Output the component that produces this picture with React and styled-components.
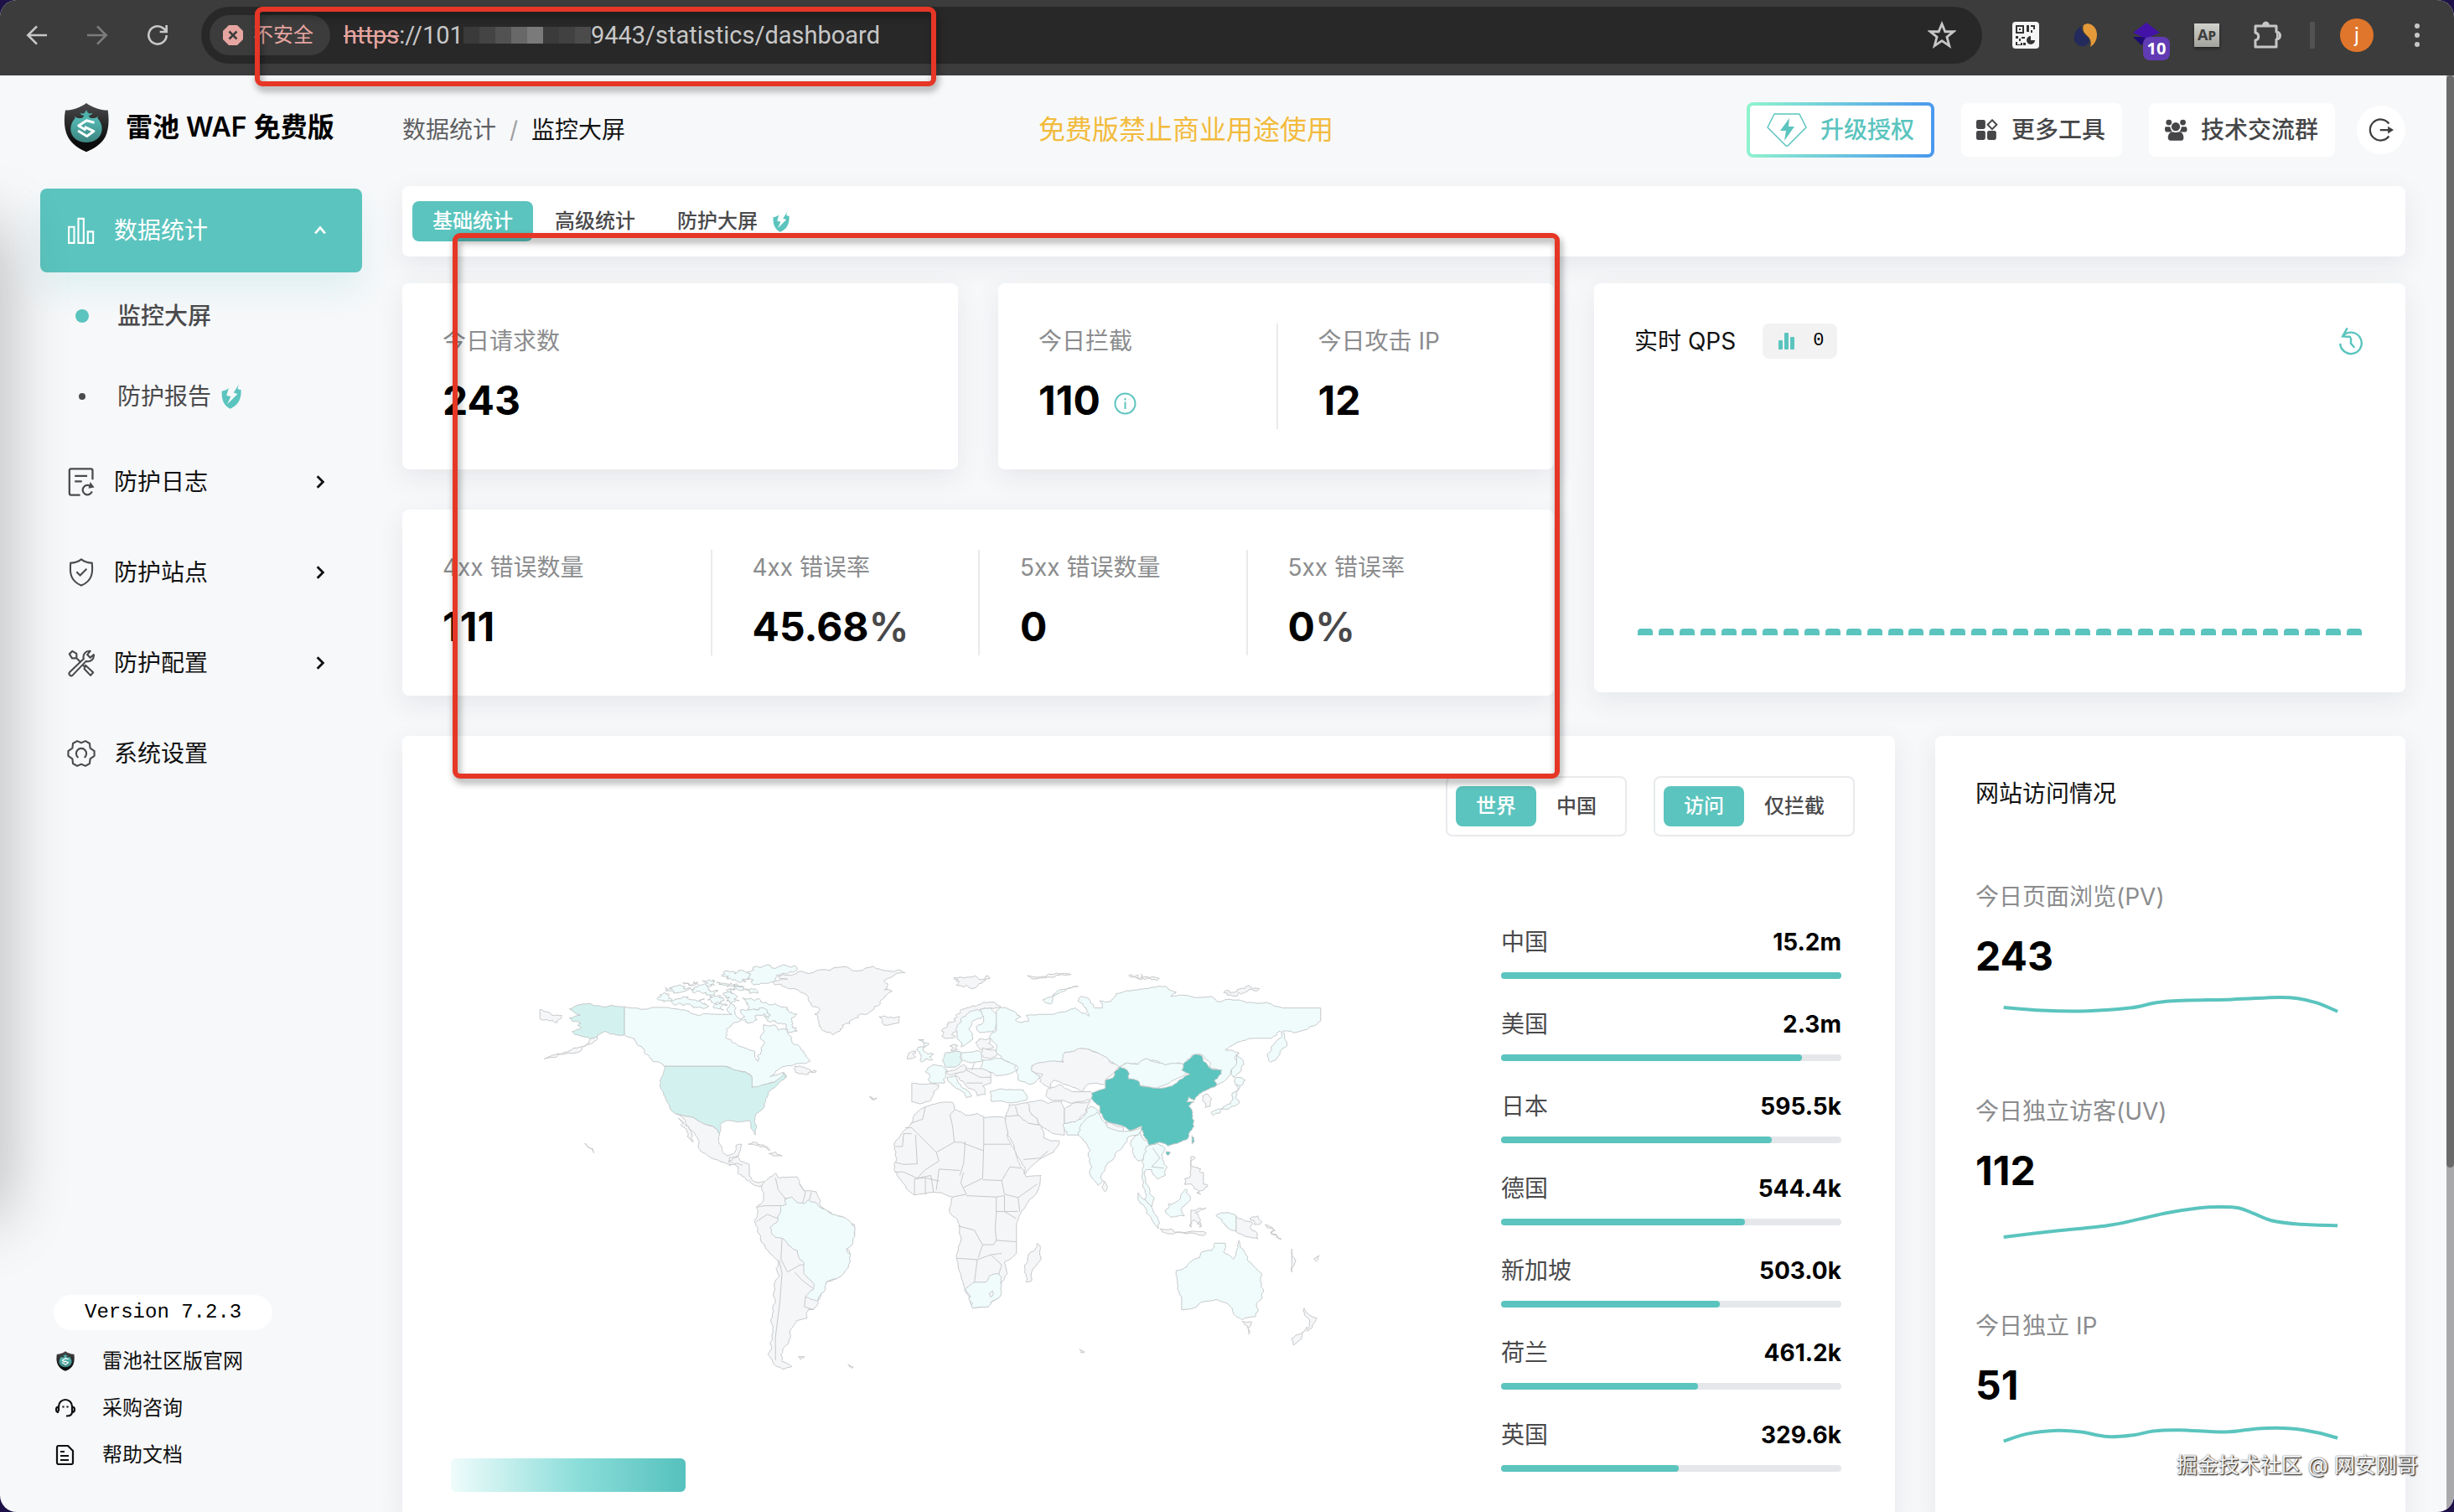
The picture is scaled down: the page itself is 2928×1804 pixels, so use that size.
import React from 'react';
import styled, { createGlobalStyle } from 'styled-components';

const teal = '#5bc4be';
const ink = '#0d0d0d';
const graphite = '#4b4b4d';

const GlobalStyle = createGlobalStyle`
  * { box-sizing: border-box; }
  html, body { margin: 0; background: #1d1147; }
  body { font-family: Inter, "Noto Sans CJK SC", sans-serif; font-size: 28px; line-height: 42px; color: ${ink}; }
  button { font: inherit; color: inherit; border: 0; padding: 0; background: none; cursor: pointer; }
  a { color: inherit; text-decoration: none; }
  h1, h2, p, ul, ol, dl, dd, dt { margin: 0; padding: 0; font-size: inherit; font-weight: inherit; list-style: none; }
  svg { display: block; flex: none; }
`;

const Window = styled.div`
  position: relative;
  display: flex;
  flex-direction: column;
  height: 100vh;
  overflow: hidden;
  border-radius: 20px;
  background: #f7f8fa;
`;

/* ---------- browser bar ---------- */

const BrowserBar = styled.header`
  display: flex;
  align-items: center;
  flex: none;
  height: 90px;
  padding: 0 8px 6px;
  background: #3c3c3c;
  color: #c7c7c7;
`;

const BarButton = styled.button`
  display: grid;
  place-items: center;
  flex: none;
  width: 72px;
  height: 72px;
  color: ${(p) => (p.$dim ? '#7c7c7c' : '#c7c7c7')};
`;

const AddressBar = styled.div`
  display: flex;
  align-items: center;
  flex: 1;
  height: 68px;
  margin: 0 16px;
  padding: 0 12px 0 10px;
  border-radius: 34px;
  background: #282828;
`;

const SecurityChip = styled.button`
  display: flex;
  align-items: center;
  gap: 12px;
  height: 48px;
  padding: 0 20px 0 16px;
  border-radius: 24px;
  background: #3c3c3c;
  && { color: #e6a5a0; }
  font-size: 24px;
`;

const Url = styled.p`
  display: flex;
  align-items: center;
  flex: 1;
  margin-left: 16px;
  font-size: 29px;
  font-family: Roboto, "Noto Sans CJK SC", sans-serif;
  color: #c7c7c7;
  s { color: #e6a5a0; }
`;

const Mosaic = styled.span`
  display: flex;
  width: 152px;
  height: 20px;
`;

const Tile = styled.span`
  flex: 1;
  background: ${(p) => p.$tone};
`;

const BarDivider = styled.span`
  width: 6px;
  height: 32px;
  margin: 0 14px 0 15px;
  background: #525252;
`;

const Avatar = styled.span`
  display: grid;
  place-items: center;
  width: 40px;
  height: 40px;
  border-radius: 50%;
  background: #e0762b;
  color: #fff;
  font-size: 24px;
  line-height: 24px;
`;

const ExtensionCount = styled.span`
  position: absolute;
  right: 8px;
  bottom: 6px;
  width: 32px;
  border-radius: 8px;
  background: #613bb3;
  color: #fff;
  font-family: "Noto Sans", sans-serif;
  font-size: 20px;
  font-weight: 700;
  line-height: 28px;
  text-align: center;
`;

const ExtensionButton = styled(BarButton)`
  position: relative;
`;

const ApTile = styled.span`
  width: 30px;
  height: 28px;
  background: linear-gradient(#d2d2cc, #a3a39d);
  box-shadow: 0 2px 3px #222;
  color: #3e3e3e;
  font-family: "Noto Sans", sans-serif;
  font-size: 18px;
  font-weight: 700;
  line-height: 26px;
  font-variant-caps: small-caps;
`;

/* ---------- page shell ---------- */

const Page = styled.div`
  display: flex;
  flex: 1;
  min-height: 0;
`;

const Sidebar = styled.aside`
  display: flex;
  flex-direction: column;
  flex: none;
  width: 480px;
  padding: 32px 48px 40px;
`;

const EdgeShade = styled.div`
  position: absolute;
  left: -60px;
  top: 270px;
  width: 60px;
  height: 1180px;
  box-shadow: 0 0 80px rgba(0, 0, 0, 0.32);
`;

const Brand = styled.h1`
  display: flex;
  align-items: center;
  gap: 20px;
  height: 60px;
  padding-left: 28px;
  font-size: 32px;
  font-weight: 600;
  color: #000;
  white-space: nowrap;
`;

const Menu = styled.nav`
  display: flex;
  flex-direction: column;
  margin-top: 43px;
`;

const MenuGroup = styled.button`
  display: flex;
  align-items: center;
  gap: 22px;
  height: 100px;
  margin-bottom: 8px;
  padding: 0 40px 0 32px;
  border-radius: 8px;
  text-align: left;
  && { color: ${(p) => (p.$active ? '#fff' : '#111')}; }
  background: ${(p) => (p.$active ? teal : 'none')};
  box-shadow: ${(p) => (p.$active ? '0 20px 40px rgba(91, 196, 190, 0.16)' : 'none')};
  svg:first-child { color: ${(p) => (p.$active ? '#fff' : graphite)}; }
  span { flex: 1; }
`;

const SubMenu = styled.ul`
  display: flex;
  flex-direction: column;
  margin: -4px 0 4px;
`;

const SubMenuLink = styled.a`
  display: flex;
  align-items: center;
  height: 96px;
  gap: 12px;
  padding-left: 38px;
  color: #4a4a4c;
  font-weight: ${(p) => (p.$active ? 500 : 400)};
`;

const Dot = styled.span`
  display: grid;
  place-items: center;
  width: 24px;
  margin-right: 18px;
  &::before {
    content: '';
    width: ${(p) => (p.$active ? 16 : 8)}px;
    height: ${(p) => (p.$active ? 16 : 8)}px;
    border-radius: 50%;
    background: ${(p) => (p.$active ? teal : graphite)};
  }
`;

const SidebarFooter = styled.footer`
  display: flex;
  flex-direction: column;
  align-items: flex-start;
  margin-top: auto;
  padding-left: 16px;
  font-size: 24px;
`;

const VersionPill = styled.p`
  margin-bottom: 9px;
  padding: 0 37px;
  border-radius: 22px;
  background: #fff;
  font-family: "Liberation Mono", monospace;
  font-size: 24px;
  line-height: 42px;
  color: #000;
`;

const FooterLink = styled.a`
  display: flex;
  align-items: center;
  gap: 32px;
  height: 56px;
  padding-left: 2px;
  color: #111;
`;

const Main = styled.main`
  display: flex;
  flex-direction: column;
  flex: 1;
  min-width: 0;
  padding: 32px 58px 0 0;
`;

const ScrollTrack = styled.div`
  position: absolute;
  top: 90px;
  right: 0;
  bottom: 0;
  width: 9px;
  background: #a9a9ab;
`;

const ScrollThumb = styled.div`
  height: 76%;
  border-radius: 5px;
  background: #6a6a6a;
`;

/* ---------- top bar of the console ---------- */

const TopBar = styled.div`
  display: flex;
  align-items: center;
  flex: none;
  gap: 32px;
  height: 66px;
  white-space: nowrap;
`;

const Breadcrumb = styled.nav`
  display: flex;
  gap: 16px;
  color: #5f6062;
  b { font-weight: 400; color: #111; }
  i { color: #a0a0a2; font-style: normal; }
`;

const Notice = styled.p`
  flex: 1;
  text-align: center;
  font-size: 32px;
  color: #f2bb3c;
`;

const TopButton = styled.button`
  display: flex;
  align-items: center;
  gap: 16px;
  height: 64px;
  padding: 0 20px 0 18px;
  border-radius: 8px;
  background: #fff;
  font-weight: 500;
  && { color: #464648; }
`;

const UpgradeButton = styled(TopButton)`
  height: 66px;
  padding: 0 20px;
  border: 4px solid transparent;
  background: linear-gradient(#fff, #fff) padding-box, linear-gradient(95deg, #8ff5cd, #4a97ee) border-box;
  && { color: ${teal}; }
`;

const RoundButton = styled.button`
  display: grid;
  place-items: center;
  width: 58px;
  height: 58px;
  margin-left: -6px;
  border-radius: 50%;
  background: #fff;
  && { color: #3f3f41; }
`;

/* ---------- cards ---------- */

const Card = styled.section`
  border-radius: 8px;
  background: #fff;
  box-shadow: 0 10px 32px rgba(60, 66, 80, 0.09);
`;

const TabsCard = styled(Card)`
  display: flex;
  align-items: center;
  flex: none;
  gap: 2px;
  height: 84px;
  margin: 34px 0 32px;
  padding: 0 12px;
`;

const Tab = styled.button`
  display: flex;
  align-items: center;
  gap: 18px;
  height: 48px;
  padding: 0 24px;
  border-radius: 8px;
  font-size: 24px;
  font-weight: 500;
  background: ${(p) => (p.$active ? teal : 'none')};
  && { color: ${(p) => (p.$active ? '#fff' : '#4a4a4c')}; }
`;

const SummaryRow = styled.div`
  display: grid;
  grid-template-columns: 1374fr 968fr;
  gap: 48px;
  align-items: start;
`;

const StatGrid = styled.div`
  display: grid;
  grid-template-columns: 1fr 1fr;
  gap: 48px;
`;

const StatCard = styled(Card)`
  display: grid;
  grid-auto-flow: column;
  grid-auto-columns: 1fr;
  padding: 48px;
  grid-column: ${(p) => (p.$wide ? '1 / -1' : 'auto')};
`;

const Stat = styled.dl`
  margin: 0;
  & + & { padding-left: 48px; border-left: 2px solid #e9eaec; }
`;

const StatLabel = styled.dt`
  color: #8b8c8e;
`;

const StatValue = styled.dd`
  display: flex;
  align-items: center;
  margin-top: 16px;
  font-size: 48px;
  font-weight: 700;
  line-height: 68px;
  color: #000;
  small { font-size: inherit; font-weight: 600; color: #48484a; }
  svg { margin: 6px 0 0 16px; }
`;

const QpsCard = styled(Card)`
  padding: 48px 48px 68px;
`;

const QpsHead = styled.div`
  display: flex;
  align-items: center;
  h2 { margin-right: 32px; color: #111; }
  button { margin-left: auto; }
`;

const RefreshButton = styled.button`
  && { color: ${teal}; }
`;

const QpsBadge = styled.span`
  display: flex;
  align-items: center;
  gap: 20px;
  padding: 0 16px 0 18px;
  border-radius: 8px;
  background: #f2f2f2;
  font-family: "Liberation Mono", monospace;
  font-size: 22px;
  color: #000;
`;

const QpsBars = styled.div`
  display: flex;
  justify-content: space-between;
  align-items: flex-end;
  height: 330px;
  padding: 0 4px;
  span {
    width: 18px;
    height: 8px;
    border-radius: 4px 4px 0 0;
    background: ${teal};
  }
`;

const DetailRow = styled.div`
  display: grid;
  grid-template-columns: 1781fr 561fr;
  gap: 48px;
  flex: 1;
  margin-top: 48px;
`;

const DetailCard = styled(Card)`
  padding: 48px 48px 0;
`;

const Filters = styled.div`
  display: flex;
  justify-content: flex-end;
  gap: 32px;
`;

const Segment = styled.div`
  display: flex;
  padding: 10px;
  border: 2px solid #e8eaed;
  border-radius: 8px;
`;

const MapLayout = styled.div`
  display: grid;
  grid-template-columns: 1fr 406px;
  margin: 104px 16px 0 0;
`;

const MapPanel = styled.div`
  padding: 18px 171px 0 72px;
`;

const MapSvg = styled.svg`
  width: 100%;
  aspect-ratio: 1020 / 540;
  path { stroke: #c6c8ca; vector-effect: non-scaling-stroke; stroke-linejoin: round; }
`;

const Legend = styled.div`
  width: 280px;
  height: 40px;
  margin: 80px 0 0 -62px;
  border-radius: 6px;
  background: linear-gradient(90deg, #effcfb, #8addd9 55%, #56c1bd);
`;

const Ranking = styled.ol`
  display: flex;
  flex-direction: column;
  gap: 32px;
`;

const RankLine = styled.p`
  display: flex;
  justify-content: space-between;
  line-height: 44px;
  color: #4a4a4c;
  b { font-weight: 700; color: #000; }
`;

const RankTrack = styled.div`
  height: 8px;
  margin-top: 14px;
  border-radius: 4px;
  background: #e5e7eb;
  div { height: 8px; border-radius: 4px; background: ${teal}; }
`;

const VisitTitle = styled.h2`
  margin-bottom: 81px;
  color: #111;
`;

const Spark = styled.svg`
  width: 100%;
  height: 84px;
  margin-bottom: 46px;
  path { fill: none; stroke: ${teal}; stroke-width: 4px; vector-effect: non-scaling-stroke; }
`;

/* ---------- overlays ---------- */

const Marker = styled.div`
  position: absolute;
  left: ${(p) => p.$x}px;
  top: ${(p) => p.$y}px;
  width: ${(p) => p.$w}px;
  height: ${(p) => p.$h}px;
  border: 6px solid #e63626;
  border-radius: 9px;
  filter: drop-shadow(2px 5px 4px rgba(0, 0, 0, 0.4));
  pointer-events: none;
`;

const Watermark = styled.p`
  position: absolute;
  right: 43px;
  bottom: 36px;
  font-size: 25px;
  line-height: 40px;
  color: #f4f4f4;
  text-shadow: 1px 1px 1px #3a3a3a, 1px 1px 2px #5a5a5a, 0 0 2px #777;
`;

/* ---------- icons ---------- */

const Line = ({ size = 32, width = 2, box = 24, children }) => (
  <svg width={size} height={size} viewBox={`0 0 ${box} ${box}`} fill="none" stroke="currentColor" strokeWidth={width} aria-hidden="true">
    {children}
  </svg>
);

const Shield = ({ width, height, id }) => (
  <svg width={width} height={height} viewBox="226 364 164 180" aria-hidden="true">
    <defs>
      <linearGradient id={`${id}-d`} x1="0" y1="0" x2="0" y2="1">
        <stop offset="0" stopColor="#4a4a4c" />
        <stop offset="0.8" stopColor="#0c0c0c" />
      </linearGradient>
      <linearGradient id={`${id}-t`} x1="0" y1="0" x2="0" y2="1">
        <stop offset="0" stopColor="#56bdb7" />
        <stop offset="1" stopColor="#3b8480" />
      </linearGradient>
    </defs>
    <path fill={`url(#${id}-d)`} d="M308 366C286 382 260 392 232 392C226 425 227 462 242 490C258 517 282 533 308 543C334 533 360 517 376 490C390 462 391 425 386 392C358 392 331 382 308 366Z" />
    <path fill={`url(#${id}-t)`} d="M263 413C278 424 291 422 300 416H316C325 422 338 424 352 413L348 420C384 460 358 509 308 509C258 509 232 460 268 420Z" />
    <path fill="#4fb3ad" d="M308 390L313 400C319 405 325 405 331 401C328 408 322 412 315 411L322 419H294L301 411C294 412 288 408 285 401C291 405 297 405 303 400Z" />
    <path fill="none" stroke="#fff" strokeWidth="9" strokeLinejoin="round" d="M337 437L309 429L280 448L306 464M302 452L335 468L310 486L278 466" />
  </svg>
);

const BoltShield = ({ small }) => (
  <svg width={small ? 20 : 24} height={small ? 25 : 30} viewBox="643 55 70 88" aria-hidden="true">
    <path fill={teal} d="M645 80C653 80 662 76 669 70L661 96L676 99L664 126L700 90L686 86L704 57L700 72C705 76 709 76 712 75C713 105 706 128 674 142C650 130 643 108 645 80Z" />
  </svg>
);

const ChartIcon = () => (
  <Line size={34} width={1.5}>
    <path d="M1.5 9h4.5v13.5H1.5zM9.5 2h4.5v20.500H9.500zM17.500 13h4.500v9.500h-4.500z" />
  </Line>
);

const LogIcon = () => (
  <Line size={34} width={1.6}>
    <path d="M11 23H3.500a1.500 1.500 0 0 1-1.500-1.500V2.500A1.500 1.500 0 0 1 3.500 1H20a1.500 1.500 0 0 1 1.500 1.500V10M6.500 7H17M6.500 11.500H12.500" />
    <path d="M20.500 16.500a4 4 0 1 0 .5 3.500" />
    <path fill="currentColor" stroke="none" d="M19.500 12L23 16.500L18 17.500Z" />
  </Line>
);

const SiteIcon = () => (
  <Line size={34} width={1.500}>
    <path strokeLinejoin="round" d="M12 1C9.500 3 6.500 4 3 4C2.200 12 2.500 19 12 23C21.500 19 21.800 12 21 4C17.500 4 14.500 3 12 1Z" />
    <path d="M8 11.500L11 14.500L16.500 9" />
  </Line>
);

const ToolsIcon = () => (
  <Line size={34} width={1.500}>
    <path strokeLinejoin="round" d="M2 4.500L4.500 2L8 4.200V7L7 8H4.200ZM8 8L11 11M13.500 14L15 15.500M15.500 14L22 20L19.800 22.500L14.500 17ZM14 8.500C13 5 15.500 1.500 19.500 2L17 5L19.500 7.500L22.500 5C23 9 19.500 11.500 16 10.500L4.500 22.500C3 23.500 1 21.500 2 20Z" />
  </Line>
);

const GearIcon = () => (
  <Line size={34} width={1.500}>
    <path strokeLinejoin="round" d="M8.500 1.500L12 3L15.500 1.500L19 3.500L19.500 7.500L23 10V14L19.500 16.500L19 20.500L15.500 22.500L12 21L8.500 22.500L5 20.500L4.500 16.500L1 14V10L4.500 7.500L5 3.500Z" />
    <path d="M9.500 15.500A4.300 4.300 0 1 1 14.500 15.500" />
  </Line>
);

const Chevron = ({ up }) => (
  <Line size={20} width={3.4}>
    <path d={up ? 'M5 16L12 8L19 16' : 'M8 4L16 12L8 20'} />
  </Line>
);

const Diamond = () => (
  <svg width="48" height="40" viewBox="0 0 48 40" aria-hidden="true">
    <path fill="none" stroke={teal} strokeWidth="1.500" strokeLinejoin="round" d="M9 1H39L47 17L25 39H23L1 17Z" />
    <path fill={teal} d="M27 6L16 21H23L21 33L33 16H26Z" />
  </svg>
);

const GridIcon = () => (
  <svg width="26" height="26" viewBox="0 0 24 24" fill="currentColor" aria-hidden="true">
    <rect x="0" y="1" width="10" height="10" rx="2" />
    <rect x="0" y="13" width="10" height="10" rx="2" />
    <rect x="12" y="13" width="10" height="10" rx="2" />
    <path fill="none" stroke="currentColor" strokeWidth="1.800" d="M17.500 1.200L22.500 6.200L17.500 11.200L12.500 6.200Z" />
  </svg>
);

const GroupIcon = () => (
  <svg width="28" height="26" viewBox="608 427 80 76" fill="currentColor" aria-hidden="true">
    <circle cx="624" cy="439" r="10" />
    <circle cx="673" cy="439" r="10" />
    <circle cx="648" cy="454" r="15" />
    <path d="M612 454H628C630 463 634 468 636 472H616C610 472 608 460 612 454ZM668 454H684C690 460 688 472 682 472H660C664 468 667 463 668 454ZM630 474C640 470 643 474 648 474C653 474 658 470 667 474C676 478 680 502 668 502H629C616 502 620 478 630 474Z" />
  </svg>
);

const ExitIcon = () => (
  <Line size={30} width={1.800}>
    <path d="M19.500 6A10 10 0 1 0 19.500 18M11 12H20" />
    <path fill="currentColor" stroke="none" d="M18.500 8.500L24 12L18.500 15.500Z" />
  </Line>
);

const HistoryIcon = () => (
  <Line size={34} width={1.700}>
    <path d="M5 8A9 9 0 1 1 3 14M9 1L5 8L12 8.500M12 9V14L15 17.500" />
  </Line>
);

const BarsIcon = () => (
  <svg width="22" height="20" viewBox="0 0 22 20" fill={teal} aria-hidden="true">
    <rect x="1" y="9" width="5" height="11" rx="1" />
    <rect x="8" y="0" width="5" height="20" rx="1" />
    <rect x="15" y="5" width="5" height="15" rx="1" />
  </svg>
);

const InfoIcon = () => (
  <svg width="27" height="27" viewBox="0 0 27 27" fill="none" stroke={teal} strokeWidth="2" aria-hidden="true">
    <circle cx="13.500" cy="13.500" r="12" />
    <path d="M13.500 11.500V20M13.500 7V9.500" />
  </svg>
);

const HeadsetIcon = () => (
  <Line size={24} width={2.200}>
    <path d="M4 16V10A8 8 0 0 1 20 10V16M4 10.500C0 10.500 0 17 4 17M20 10.500C24 10.500 24 17 20 17C20 20 17 21.500 13 21.500M9.500 9.500V11.500M14.500 9.500V11.500" />
  </Line>
);

const DocIcon = () => (
  <Line size={24} width={2.200}>
    <path strokeLinejoin="round" d="M2 3A2 2 0 0 1 4 1H15L21 7V21A2 2 0 0 1 19 23H4A2 2 0 0 1 2 21ZM6 8H11M6 13H16M6 18H16" />
  </Line>
);

/* ---------- world map ---------- */

const base = '#f5f6f8';
const faint = '#effcfb';
const soft = '#e2f6f5';
const mid = '#d3f2ef';

/* Each land is a run of x,y pairs; the last entry is how ragged its coast is. */
const lands = [
  [mid, '223 236 200 231 160 224 140 229 122 243 130 255 142 265 122 275 127 285 143 293 137 300 143 310 127 322 140 335 160 347 172 340 180 328 185 322 198 330 223 333', 0.12],
  [base, '160 347 172 340 165 362 145 380 112 400 76 416 110 396 140 376 158 360', 0.12],
  [base, '68 245 90 265 108 266 100 290 80 280 68 278', 0.15],
  [faint, '223 236 255 245 275 238 300 238 320 244 345 258 362 265 390 262 420 262 412 240 418 225 428 240 426 262 437 280 425 290 410 315 408 340 425 362 448 380 462 390 462 410 468 425 475 390 480 362 472 340 478 315 478 298 500 300 505 318 515 312 523 330 530 355 545 375 552 395 563 425 540 432 520 440 500 462 490 478 505 470 513 462 520 480 498 497 480 505 457 515 457 480 445 462 425 455 407 442 296 442 275 425 262 400 248 370 235 342 223 333', 0.12],
  [faint, '440 205 470 208 500 225 520 245 535 270 530 300 540 320 520 300 500 285 480 270 470 245 450 230', 0.3],
  [faint, '440 245 470 240 490 262 488 275 462 268 455 290 437 278', 0.3],
  [faint, '315 210 340 200 370 208 375 230 350 240 330 232 310 222', 0.3],
  [faint, '288 195 305 192 310 210 295 220 285 212', 0.3],
  [faint, '430 125 460 108 500 103 540 107 520 122 500 140 480 155 460 160 455 140 440 133', 0.25],
  [faint, '410 178 440 175 465 178 468 188 420 187', 0.35],
  [faint, '298 168 320 163 345 172 335 182 305 180', 0.4],
  [faint, '330 152 350 148 358 158 340 160', 0.4],
  [faint, '350 170 378 172 395 180 362 184', 0.4],
  [faint, '366 145 385 142 388 160 372 158', 0.4],
  [faint, '392 150 418 153 440 165 412 168', 0.4],
  [faint, '402 125 425 122 452 135 445 150 412 140', 0.4],
  [faint, '380 198 398 195 402 215 386 222', 0.35],
  [faint, '405 196 430 200 420 222 410 215', 0.35],
  [faint, '390 228 412 230 405 246 392 240', 0.35],
  [base, '497 148 522 140 505 130 540 115 580 108 620 98 680 96 710 112 738 118 715 130 700 150 705 165 700 178 714 182 700 200 693 215 690 230 680 245 655 262 640 280 622 300 612 325 605 333 590 320 580 295 578 275 572 262 580 250 565 230 560 210 545 185 520 168 500 160', 0.16],
  [base, '690 270 705 272 728 270 727 285 710 298 695 288', 0.25],
  [mid, '296 442 407 442 425 455 445 462 457 480 457 515 480 505 498 497 510 480 515 462 517 485 502 510 487 530 482 560 480 580 465 605 462 620 465 655 463 680 455 650 452 630 430 635 410 630 398 645 397 675 385 650 367 640 350 620 330 612 318 607 303 570 298 550 290 520 291 478', 0.06],
  [base, '318 607 330 612 350 620 367 640 385 650 397 675 396 705 402 730 412 752 423 745 428 715 438 712 433 750 415 760 418 785 405 775 380 757 362 735 360 705 350 670 335 630', 0.07],
  [base, '322 622 332 640 345 690 348 705 338 685 328 650', 0.1],
  [base, '415 770 432 755 452 782 452 815 460 840 470 845 478 840 472 858 458 850 445 830 432 800', 0.12],
  [base, '450 712 460 704 478 715 490 733 472 722 460 712', 0.15],
  [base, '488 745 500 738 512 752 495 752', 0.2],
  [base, '478 845 490 825 500 812 505 828 540 826 545 855 555 874 575 877 582 908 584 930 605 955 625 965 645 990 645 1015 630 1070 625 1160 593 1190 588 1220 578 1255 570 1285 560 1285 558 1315 538 1325 530 1350 525 1390 510 1440 512 1465 530 1482 515 1492 500 1480 486 1440 490 1400 495 1340 500 1260 507 1170 505 1115 480 1060 467 1000 462 975 467 950 465 930 478 900 475 870', 0.07],
  [faint, '510 925 520 920 518 900 530 895 540 915 552 918 560 905 575 915 583 932 605 955 625 965 640 985 645 1015 630 1075 625 1160 593 1190 588 1225 575 1255 555 1240 570 1215 565 1185 552 1160 552 1130 540 1080 515 1040 500 1035 490 1000 505 975', 0.08],
  [base, '775 582 800 568 825 567 828 590 850 612 870 605 885 620 918 618 928 640 926 665 938 730 945 770 955 800 960 825 987 820 985 845 975 890 950 950 942 985 942 1090 920 1120 925 1160 912 1200 912 1240 890 1275 862 1280 855 1240 845 1200 835 1130 833 1090 838 1000 832 970 820 950 822 915 825 895 805 880 790 878 755 888 740 865 725 825 717 800 722 760 718 720 730 680 745 650 755 610', 0.05],
  [faint, '848 1215 865 1190 885 1190 900 1162 910 1160 915 1200 912 1240 890 1275 862 1280 855 1250', 0.08],
  [base, '892 1230 898 1220 900 1232 895 1242', 0],
  [base, '980 1055 985 1080 975 1140 970 1185 960 1190 957 1155 962 1110 963 1095 975 1080', 0.08],
  [base, '750 500 785 502 800 508 790 530 785 560 765 572 750 565', 0.08],
  [faint, '775 460 790 437 805 440 815 455 812 475 810 500 785 500 783 470', 0.1],
  [faint, '762 350 772 350 775 375 790 400 788 420 768 428 765 400', 0.25],
  [base, '745 395 758 390 757 410 742 417', 0.2],
  [base, '805 320 815 300 830 285 835 260 850 240 875 228 905 225 912 238 895 240 875 245 855 260 845 285 835 310 830 340 810 345', 0.2],
  [faint, '833 320 840 290 852 260 870 245 880 260 878 275 860 290 855 310 862 330 850 365 840 375 833 345', 0.1],
  [faint, '875 245 895 240 905 285 900 320 875 325 868 305 882 285', 0.1],
  [base, '820 372 830 366 834 385 822 388', 0.25],
  [soft, '812 395 840 392 842 425 830 445 812 445 806 420', 0.08],
  [faint, '842 395 870 388 880 395 878 425 860 430 843 420', 0.08],
  [base, '873 348 893 345 900 378 878 385', 0.15],
  [base, '880 378 905 385 908 400 895 415 882 412', 0.1],
  [faint, '880 420 915 415 940 435 943 455 925 470 905 475 890 460 875 450', 0.1],
  [faint, '815 480 830 475 835 500 855 530 860 545 850 550 840 525 822 500', 0.08],
  [base, '835 450 875 450 895 465 895 500 880 510 885 540 870 545 858 520 845 495 830 475', 0.12],
  [base, '812 460 845 435 850 455 820 472', 0.1],
  [faint, '893 530 915 520 955 525 960 560 925 568 895 562', 0.08],
  [faint, '905 250 912 238 940 255 950 270 940 280 948 290 965 285 960 265 985 262 1010 262 1035 250 1050 240 1060 255 1075 268 1070 240 1055 215 1060 200 1075 208 1085 240 1100 240 1095 215 1115 218 1125 190 1145 180 1190 168 1215 165 1235 185 1225 200 1240 195 1300 200 1310 218 1350 212 1380 222 1400 220 1430 240 1500 240 1500 285 1490 300 1475 315 1455 325 1430 320 1435 350 1425 400 1408 428 1402 400 1415 365 1425 320 1410 345 1380 345 1345 360 1325 385 1350 395 1345 440 1325 490 1305 512 1305 480 1318 455 1300 450 1290 420 1280 400 1265 403 1255 437 1240 430 1215 437 1180 418 1165 435 1140 432 1130 445 1115 425 1090 395 1060 380 1030 395 1030 425 1000 430 970 440 972 460 985 475 975 500 965 505 945 490 945 470 943 440 915 415 908 400 905 385 893 345 905 320 905 285', 0.1],
  [base, '970 460 975 435 1000 425 1028 428 1030 395 1060 380 1090 395 1115 430 1130 445 1110 480 1105 505 1075 502 1060 530 1040 510 1010 490 1005 515 985 495 990 470', 0.08],
  [faint, '1130 445 1145 430 1165 435 1180 415 1215 437 1245 432 1262 460 1230 490 1200 518 1165 508 1145 480', 0.06],
  [base, '1000 520 1020 505 1045 530 1078 530 1082 555 1045 570 1025 560 1005 560', 0.1],
  [base, '960 570 985 560 1000 570 1025 562 1030 590 1030 680 1005 670 985 645 970 610', 0.08],
  [base, '1030 590 1045 570 1078 562 1070 600 1050 635 1030 640', 0.08],
  [faint, '1030 640 1050 635 1070 605 1078 580 1095 600 1075 625 1060 645 1055 680 1035 680', 0.1],
  [base, '928 575 960 568 970 610 985 645 965 640 945 612 922 615', 0.08],
  [base, '922 615 945 612 965 640 985 645 992 690 1005 700 1020 700 1010 740 975 780 958 815 950 770 930 690 922 640', 0.05],
  [faint, '1055 680 1060 645 1090 600 1100 630 1115 650 1140 668 1155 665 1172 652 1165 680 1145 690 1140 710 1125 740 1105 790 1100 840 1092 855 1080 790 1072 715 1065 700', 0.08],
  [base, '1105 635 1138 652 1138 668 1110 655', 0.08],
  [base, '1102 838 1109 860 1104 876 1099 862', 0.08],
  [faint, '1165 680 1172 652 1180 700 1190 720 1178 760 1165 770 1155 740 1150 710', 0.1],
  [faint, '1180 720 1200 710 1215 730 1208 750 1218 790 1215 820 1200 832 1190 800 1180 800 1185 860 1195 900 1190 930 1178 870 1172 800 1175 760', 0.08],
  [teal, '1272 400 1282 405 1285 425 1300 452 1318 455 1312 480 1305 490 1308 510 1290 525 1280 535 1268 560 1258 548 1254 565 1268 565 1258 580 1265 610 1268 650 1255 695 1235 710 1220 718 1205 705 1185 715 1178 690 1172 650 1150 665 1110 635 1100 615 1095 580 1082 560 1080 535 1105 518 1105 490 1120 480 1122 460 1132 445 1145 455 1147 485 1165 492 1168 508 1202 518 1228 510 1240 490 1260 470 1245 455 1248 435 1265 405', 0.07],
  [teal, '1216 738 1224 740 1220 752', 0.1],
  [teal, '1264 682 1268 690 1264 712', 0.1],
  [base, '1283 545 1293 538 1298 580 1288 585', 0.12],
  [faint, '1346 500 1347 540 1342 580 1320 590 1303 612 1300 600 1325 580 1338 560', 0.15],
  [faint, '1345 480 1362 490 1352 510 1343 500', 0.15],
  [faint, '1346 400 1354 415 1355 455 1340 482 1346 430', 0.1],
  [base, '1262 755 1270 760 1268 790 1285 810 1285 850 1280 885 1268 860 1262 800', 0.25],
  [faint, '1165 880 1190 930 1205 985 1202 1005 1180 950 1165 905', 0.08],
  [base, '1205 1005 1240 1018 1290 1020 1285 1028 1220 1022', 0.15],
  [faint, '1220 920 1240 905 1252 868 1260 890 1252 920 1250 960 1225 965', 0.12],
  [base, '1262 940 1290 932 1270 950 1278 1000 1266 975 1262 1000', 0.2],
  [faint, '1310 955 1325 950 1345 960 1345 1015 1325 990', 0.15],
  [base, '1345 960 1375 985 1370 1000 1385 1040 1345 1015', 0.1],
  [base, '1370 970 1385 960 1392 980 1378 990', 0.2],
  [base, '1398 990 1412 1005 1428 1040 1410 1020', 0.2],
  [faint, '1235 1150 1255 1135 1278 1105 1282 1085 1300 1080 1305 1055 1325 1055 1322 1085 1340 1110 1350 1045 1362 1090 1375 1130 1392 1165 1395 1215 1382 1270 1380 1310 1355 1320 1340 1300 1330 1265 1310 1250 1280 1260 1270 1278 1245 1285 1245 1245 1237 1190', 0.07],
  [base, '1356 1325 1374 1328 1368 1370', 0.1],
  [base, '1470 1280 1480 1305 1493 1315 1485 1345 1475 1360 1480 1325', 0.08],
  [base, '1475 1345 1465 1385 1450 1408 1447 1385', 0.08],
  [base, '828 140 850 134 890 128 885 145 850 160', 0.4],
  [base, '962 128 1000 122 1042 124 1010 134', 0.2],
  [faint, '1055 165 1020 178 990 212 1005 226 1008 205 1028 183', 0.12],
  [base, '1148 128 1170 122 1200 145 1170 142', 0.4],
  [base, '1325 180 1355 172 1384 180 1350 186', 0.4],
  [base, '545 440 560 450 574 462 560 470 540 465', 0.3],
  [base, '150 710 165 728 167 742 158 724', 0.1],
  [base, '542 1448 553 1448 547 1458', 0.3],
  [base, '1488 1108 1498 1098 1492 1118', 0.2],
  [base, '1447 1075 1451 1105 1447 1155', 0.1],
  [base, '672 548 686 552 676 556', 0.3],
  [base, '1058 1422 1067 1432 1060 1434', 0.2],
  [base, '633 1476 643 1484 640 1488', 0.2],
];

const frontiers = [
  '775 582 770 625 748 640', '738 655 750 655 795 740 828 705 825 650 820 610 830 590', '882 618 882 712 930 712',
  '882 735 840 705 828 705', '720 720 733 720 735 675 750 675', '757 680 760 780 735 782 720 775', '795 740 800 770 775 800 760 830 735 808 718 808',
  '848 702 845 780 838 820', '838 803 800 798 795 870', '882 712 880 830 845 862', '880 835 915 838 930 790 950 795',
  '915 838 920 885 945 897 980 850', '845 810 840 845 850 885 825 895', '850 890 905 895 905 950 903 1000 905 1045', '905 895 920 890 920 945 942 970',
  '905 945 945 945', '835 995 865 1010 875 1045 880 1060 900 1060 905 1045 942 1050', '833 1107 870 1112 895 1095 915 1090',
  '870 1112 865 1190', '895 1095 915 1130 910 1160', '755 888 755 832 775 828 800 840', '775 887 775 830', '790 878 785 820 760 830',
  '880 1060 872 1105', '945 897 948 945', '465 930 480 925 510 925', '465 980 485 955 505 970', '512 1040 510 1110 522 1155 545 1130 552 1130',
  '507 1115 512 1160 508 1260 500 1380 500 1460', '535 1155 550 1185 568 1210', '500 828 505 870 520 905', '545 850 555 880 550 915',
  '566 878 562 905', '555 1240 553 1275 570 1285', '955 765 985 760 1000 735', '415 785 430 778 440 785', '1192 725 1205 760 1190 790 1212 795',
  '850 455 875 480 895 480', '865 430 860 455', '850 500 880 500', '945 612 940 580',
];

const random = (seed) => {
  const v = Math.sin(seed) * 43758.5453;
  return v - Math.floor(v) - 0.5;
};

const pairs = (text) => {
  const n = text.split(' ').map(Number);
  const out = [];
  for (let i = 0; i < n.length; i += 2) out.push([n[i], n[i + 1]]);
  return out;
};

/* Splits an edge in two with the middle pushed sideways; both directions of an edge give the same line. */
const split = (a, b, rough, depth) => {
  const dx = b[0] - a[0];
  const dy = b[1] - a[1];
  if (depth === 0 || Math.hypot(dx, dy) < 6) return [b];
  const sign = a[0] < b[0] || (a[0] === b[0] && a[1] < b[1]) ? 1 : -1;
  const k = random((a[0] + b[0]) * 12.9 + (a[1] + b[1]) * 78.2) * 2 * rough * sign;
  const m = [(a[0] + b[0]) / 2 - dy * k, (a[1] + b[1]) / 2 + dx * k];
  return [...split(a, m, rough, depth - 1), ...split(m, b, rough, depth - 1)];
};

/* Edges that run exactly along an axis are surveyed borders and stay straight. */
const outline = (text, rough) => {
  const p = pairs(text);
  const out = [p[0]];
  p.forEach((a, i) => {
    const b = p[(i + 1) % p.length];
    if (a[0] === b[0] || a[1] === b[1]) out.push(b);
    else out.push(...split(a, b, rough * 1.6, 3));
  });
  return `M${out.map(([x, y]) => `${x.toFixed(1)} ${y.toFixed(1)}`).join('L')}Z`;
};

const WorldMap = () => (
  <MapSvg viewBox="0 0 1568 1568" preserveAspectRatio="none" role="img" aria-label="世界">
    {lands.map(([fill, text, rough]) => (
      <path key={text} fill={fill} d={outline(text, rough)} />
    ))}
    {frontiers.map((text) => (
      <path key={text} fill="none" d={`M${text}`} />
    ))}
  </MapSvg>
);

/* ---------- data ---------- */

const ranking = [
  ['中国', '15.2m', 100],
  ['美国', '2.3m', 88.4],
  ['日本', '595.5k', 79.5],
  ['德国', '544.4k', 71.6],
  ['新加坡', '503.0k', 64.4],
  ['荷兰', '461.2k', 58],
  ['英国', '329.6k', 52.2],
];

const visits = [
  ['今日页面浏览(PV)', '243', 525, '882 570 940 576 1010 577 1075 571 1130 558 1230 554 1300 550 1330 552 1360 561 1391 578'],
  ['今日独立访客(UV)', '112', 952, '882 1027 960 1015 1040 1004 1090 991 1130 979 1180 969 1210 967 1240 969 1265 981 1290 994 1330 1001 1391 1004'],
  ['今日独立 IP', '51', 1379, '882 1433 920 1418 965 1412 1000 1415 1040 1424 1080 1421 1110 1413 1150 1411 1220 1415 1270 1408 1320 1408 1360 1416 1391 1427'],
];

const smooth = (text) => {
  const p = pairs(text);
  return p.slice(1).reduce((d, b, i) => {
    const a = p[i];
    const z = p[i - 1] || a;
    const c = p[i + 2] || b;
    return `${d}C${a[0] + (b[0] - z[0]) / 6} ${a[1] + (b[1] - z[1]) / 6} ${b[0] - (c[0] - a[0]) / 6} ${b[1] - (c[1] - a[1]) / 6} ${b[0]} ${b[1]}`;
  }, `M${p[0][0]} ${p[0][1]}`);
};

const Metric = ({ label, value, unit, info }) => (
  <Stat>
    <StatLabel>{label}</StatLabel>
    <StatValue>
      {value}
      {unit && <small>{unit}</small>}
      {info && <InfoIcon />}
    </StatValue>
  </Stat>
);

const tiles = ['#3a3a3a', '#444444', '#525252', '#686868', '#7a7a7a', '#3b3b3b', '#414141', '#4b4b4b'];

const Browser = () => (
  <BrowserBar>
    <BarButton aria-label="后退"><Line size={32}><path d="M21 12H4M12 4L4 12L12 20" /></Line></BarButton>
    <BarButton aria-label="前进" $dim><Line size={32}><path d="M3 12H20M12 4L20 12L12 20" /></Line></BarButton>
    <BarButton aria-label="刷新"><Line size={32}><path d="M20 12A8 8 0 1 1 17 5.700L20 8.500M20 3V9H14" /></Line></BarButton>
    <AddressBar>
      <SecurityChip>
        <svg width="24" height="24" viewBox="0 0 24 24" aria-hidden="true">
          <path fill="#e6a5a0" d="M7 0H17L24 7V17L17 24H7L0 17V7Z" />
          <path stroke="#3c3c3c" strokeWidth="2.500" d="M7.500 7.500L16.500 16.500M16.500 7.500L7.500 16.500" />
        </svg>
        不安全
      </SecurityChip>
      <Url>
        <s>https</s>://101
        <Mosaic>{tiles.map((t) => <Tile key={t} $tone={t} />)}</Mosaic>
        9443/statistics/dashboard
      </Url>
      <BarButton aria-label="收藏">
        <Line size={34} width={2}><path d="M12 2.500L14.700 9H21.800L16.200 13.500L18.200 21L12 16.700L5.800 21L7.800 13.500L2.200 9H9.300Z" /></Line>
      </BarButton>
    </AddressBar>
    <BarButton aria-label="QR">
      <svg width="32" height="32" viewBox="0 0 32 32" aria-hidden="true">
        <rect width="32" height="32" rx="4" fill="#f5f5f5" />
        <path fill="none" stroke="#333" strokeWidth="2" d="M5 5H13V13H5Z" />
        <path fill="#333" d="M8 8H10V10H8ZM17 4H20V12H17ZM22 4H27V9H25V6H22ZM22 10H24V13H22ZM4 17H7V20H4ZM8 20H10V23H8ZM11 18H15V20H11ZM4 24H6V27H10V25H12V28H4ZM13 25H16V28H13Z" />
        <path fill="#333" d="M22 17V22H27A5 5 0 1 1 22 17Z" />
      </svg>
    </BarButton>
    <BarButton aria-label="扩展">
      <svg width="32" height="32" viewBox="0 0 32 32" aria-hidden="true">
        <path fill="#232a5c" d="M10 5C0 12 -1 24 7 28C13 31 19 28 20 22C18 16 10 16 10 5Z" />
        <path fill="#e59a3a" d="M13 4C20 -1 29 6 29 15C29 22 26 27 21 30C24 20 17 17 14 13C12 10 12 6 13 4Z" />
      </svg>
    </BarButton>
    <ExtensionButton aria-label="扩展 10">
      <svg width="40" height="32" viewBox="0 0 40 32" aria-hidden="true">
        <path fill="#1d0a72" d="M4 18L14 28L22 18Z" />
        <path fill="#4313a8" d="M20 1L36 13L20 20L4 13Z" />
      </svg>
      <ExtensionCount>10</ExtensionCount>
    </ExtensionButton>
    <BarButton aria-label="AP"><ApTile>Ap</ApTile></BarButton>
    <BarButton aria-label="扩展程序">
      <svg width="34" height="34" viewBox="0 0 34 34" fill="none" stroke="#c7c7c7" strokeWidth="3" strokeLinejoin="round" aria-hidden="true">
        <path d="M3 6H28V13C34 13 34 22 28 22V31H3V23C8 22 8 15 3 14Z" />
        <path fill="#c7c7c7" stroke="none" d="M11 6A4 5 0 0 1 20 6ZM28 13A5 5 0 0 1 28 22Z" />
      </svg>
    </BarButton>
    <BarDivider />
    <BarButton aria-label="账户"><Avatar>j</Avatar></BarButton>
    <BarButton aria-label="菜单">
      <svg width="8" height="30" viewBox="0 0 8 30" fill="#c7c7c7" aria-hidden="true">
        <circle cx="4" cy="4" r="3" /><circle cx="4" cy="15" r="3" /><circle cx="4" cy="26" r="3" />
      </svg>
    </BarButton>
  </BrowserBar>
);

export default function App() {
  return (
    <Window>
      <GlobalStyle />
      <Browser />
      <Page>
        <Sidebar>
          <Brand><Shield id="brand" width={54} height={60} />雷池 WAF 免费版</Brand>
          <Menu>
            <MenuGroup $active><ChartIcon /><span>数据统计</span><Chevron up /></MenuGroup>
            <SubMenu>
              <li><SubMenuLink href="#board" $active><Dot $active />监控大屏</SubMenuLink></li>
              <li><SubMenuLink href="#report"><Dot />防护报告<BoltShield /></SubMenuLink></li>
            </SubMenu>
            <MenuGroup><LogIcon /><span>防护日志</span><Chevron /></MenuGroup>
            <MenuGroup><SiteIcon /><span>防护站点</span><Chevron /></MenuGroup>
            <MenuGroup><ToolsIcon /><span>防护配置</span><Chevron /></MenuGroup>
            <MenuGroup><GearIcon /><span>系统设置</span></MenuGroup>
          </Menu>
          <SidebarFooter>
            <VersionPill>Version 7.2.3</VersionPill>
            <FooterLink href="#site"><Shield id="site" width={24} height={24} />雷池社区版官网</FooterLink>
            <FooterLink href="#sales"><HeadsetIcon />采购咨询</FooterLink>
            <FooterLink href="#docs"><DocIcon />帮助文档</FooterLink>
          </SidebarFooter>
        </Sidebar>
        <Main>
          <TopBar>
            <Breadcrumb><a href="#stats">数据统计</a><i>/</i><b>监控大屏</b></Breadcrumb>
            <Notice>免费版禁止商业用途使用</Notice>
            <UpgradeButton><Diamond />升级授权</UpgradeButton>
            <TopButton><GridIcon />更多工具</TopButton>
            <TopButton><GroupIcon />技术交流群</TopButton>
            <RoundButton aria-label="退出"><ExitIcon /></RoundButton>
          </TopBar>
          <TabsCard as="nav">
            <Tab $active>基础统计</Tab>
            <Tab>高级统计</Tab>
            <Tab>防护大屏<BoltShield small /></Tab>
          </TabsCard>
          <SummaryRow>
            <StatGrid>
              <StatCard><Metric label="今日请求数" value="243" /></StatCard>
              <StatCard>
                <Metric label="今日拦截" value="110" info />
                <Metric label="今日攻击 IP" value="12" />
              </StatCard>
              <StatCard $wide>
                <Metric label="4xx 错误数量" value="111" />
                <Metric label="4xx 错误率" value="45.68" unit="%" />
                <Metric label="5xx 错误数量" value="0" />
                <Metric label="5xx 错误率" value="0" unit="%" />
              </StatCard>
            </StatGrid>
            <QpsCard>
              <QpsHead>
                <h2>实时 QPS</h2>
                <QpsBadge><BarsIcon />0</QpsBadge>
                <RefreshButton aria-label="历史"><HistoryIcon /></RefreshButton>
              </QpsHead>
              <QpsBars>{Array.from({ length: 35 }, (_, i) => <span key={i} />)}</QpsBars>
            </QpsCard>
          </SummaryRow>
          <DetailRow>
            <DetailCard>
              <Filters>
                <Segment><Tab $active>世界</Tab><Tab>中国</Tab></Segment>
                <Segment><Tab $active>访问</Tab><Tab>仅拦截</Tab></Segment>
              </Filters>
              <MapLayout>
                <MapPanel><WorldMap /><Legend /></MapPanel>
                <Ranking>
                  {ranking.map(([name, value, share]) => (
                    <li key={name}>
                      <RankLine>{name}<b>{value}</b></RankLine>
                      <RankTrack><div style={{ width: `${share}%` }} /></RankTrack>
                    </li>
                  ))}
                </Ranking>
              </MapLayout>
            </DetailCard>
            <DetailCard>
              <VisitTitle>网站访问情况</VisitTitle>
              {visits.map(([label, value, top, line]) => (
                <React.Fragment key={label}>
                  <Metric label={label} value={value} />
                  <Spark viewBox={`839 ${top} 594 140`} preserveAspectRatio="none" aria-hidden="true">
                    <path d={smooth(line)} />
                  </Spark>
                </React.Fragment>
              ))}
            </DetailCard>
          </DetailRow>
        </Main>
      </Page>
      <EdgeShade />
      <ScrollTrack><ScrollThumb /></ScrollTrack>
      <Marker $x={304} $y={8} $w={813} $h={95} />
      <Marker $x={540} $y={278} $w={1321} $h={651} />
      <Watermark>掘金技术社区 @ 网安刚哥</Watermark>
    </Window>
  );
}
